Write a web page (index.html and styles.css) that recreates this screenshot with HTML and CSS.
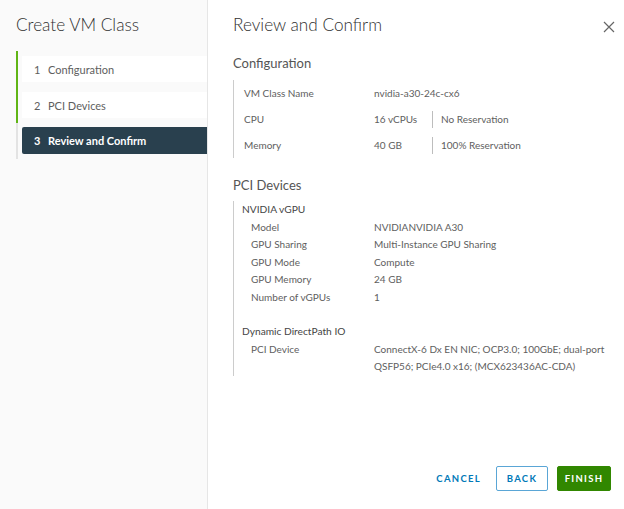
FILE: index.html
```html
<!DOCTYPE html>
<html>
<head>
<meta charset="utf-8">
<link rel="stylesheet" href="styles.css">
</head>
<body>
<div class="wizard">
  <aside class="sidebar">
    <h1 class="side-title">Create VM Class</h1>
    <ol class="steps">
      <li class="step done"><div class="step-box"><span class="num">1</span>Configuration</div></li>
      <li class="step done"><div class="step-box"><span class="num">2</span>PCI Devices</div></li>
      <li class="step current"><div class="step-box"><span class="num">3</span>Review and Confirm</div></li>
    </ol>
  </aside>
  <main class="main">
    <header class="main-head">
      <h2 class="main-title">Review and Confirm</h2>
      <button class="close" aria-label="Close">
        <svg width="12" height="12" viewBox="0 0 12 12"><path d="M1 1 L11 11 M11 1 L1 11" stroke="#666" stroke-width="1.2" fill="none"/></svg>
      </button>
    </header>
    <section class="content">
      <h3 class="sec-title">Configuration</h3>
      <div class="block config">
        <div class="row"><span class="lbl">VM Class Name</span><span class="val">nvidia-a30-24c-cx6</span></div>
        <div class="row"><span class="lbl">CPU</span><span class="val short">16 vCPUs</span><span class="sep"></span><span class="extra">No Reservation</span></div>
        <div class="row"><span class="lbl">Memory</span><span class="val short">40 GB</span><span class="sep"></span><span class="extra">100% Reservation</span></div>
      </div>
      <h3 class="sec-title pci">PCI Devices</h3>
      <div class="block pci-block">
        <div class="sub">NVIDIA vGPU</div>
        <div class="prow"><span class="plbl">Model</span><span class="pval">NVIDIANVIDIA A30</span></div>
        <div class="prow"><span class="plbl">GPU Sharing</span><span class="pval">Multi-Instance GPU Sharing</span></div>
        <div class="prow"><span class="plbl">GPU Mode</span><span class="pval">Compute</span></div>
        <div class="prow"><span class="plbl">GPU Memory</span><span class="pval">24 GB</span></div>
        <div class="prow"><span class="plbl">Number of vGPUs</span><span class="pval">1</span></div>
        <div class="sub gap">Dynamic DirectPath IO</div>
        <div class="prow"><span class="plbl">PCI Device</span><span class="pval wrap">ConnectX-6 Dx EN NIC; OCP3.0; 100GbE; <span class="nw">dual-port</span> QSFP56; PCIe4.0 x16; (MCX623436AC-CDA)</span></div>
      </div>
    </section>
    <footer class="foot">
      <button class="btn link">CANCEL</button>
      <button class="btn outline">BACK</button>
      <button class="btn primary">FINISH</button>
    </footer>
  </main>
</div>
</body>
</html>
```
FILE: styles.css
```css
* { box-sizing: border-box; }
html, body { margin: 0; padding: 0; }
body {
  font-family: Lato, "Open Sans", "Liberation Sans", sans-serif;
  color: #5e5e5e;
  background: #fff;
  width: 624px;
  height: 509px;
  overflow: hidden;
}
.wizard { display: flex; height: 509px; }
.sidebar {
  width: 208px;
  flex: none;
  background: #fafafa;
  border-right: 1px solid #e6e6e6;
  padding-top: 13px;
}
.side-title {
  margin: 0 0 14px 16px;
  font-size: 17.2px;
  line-height: 24px;
  font-weight: 300;
  color: #313131;
}
.steps {
  list-style: none;
  margin: 0 0 0 16px;
  padding: 0;
}
.step {
  border-left: 2px solid #e3e3e3;
  padding: 5px 0 5px 4px;
  height: 36px;
}
.step.done { border-left-color: #60b515; }
.step-box {
  height: 26px;
  background: #fff;
  display: flex;
  align-items: center;
  padding-left: 12px;
  font-size: 11px;
  color: #5e5e5e;
}
.num { width: 14px; flex: none; }
.step.current { padding-top: 4px; }
.step.current .step-box {
  background: #29404e;
  color: #fff;
  font-weight: 700;
  height: 27px;
  border-radius: 2px 0 0 2px;
}
.main {
  flex: 1;
  display: flex;
  flex-direction: column;
  padding: 13px 7px 18px 25px;
}
.main-head {
  display: flex;
  justify-content: space-between;
  align-items: flex-start;
}
.main-title {
  margin: 0;
  font-size: 17.2px;
  line-height: 24px;
  font-weight: 300;
  color: #313131;
}
.close {
  border: 0;
  background: none;
  padding: 0;
  margin: 6px 0 0 0;
  width: 16px;
  height: 16px;
  display: flex;
  align-items: center;
  justify-content: center;
}
.content { flex: 1; }
.sec-title {
  margin: 17px 0 8px 0;
  font-size: 13px;
  line-height: 18px;
  font-weight: 400;
  color: #555;
}
.sec-title.pci { margin: 18px 0 7px 0; }
.block {
  border-left: 1px solid #cccccc;
}
.config { padding-left: 10px; }
.row {
  display: flex;
  align-items: center;
  height: 26px;
  font-size: 10px;
}
.lbl { width: 130px; flex: none; }
.val.short { width: 58px; flex: none; }
.sep {
  width: 1px;
  height: 17px;
  background: #bdbdbd;
  margin-right: 8px;
}
.pci-block { padding-left: 8px; }
.sub {
  font-size: 10.2px;
  line-height: 17.5px;
  color: #454545;
}
.sub.gap { margin-top: 17px; }
.prow {
  display: flex;
  font-size: 10px;
  line-height: 17.5px;
  padding-left: 9px;
}
.plbl { width: 123px; flex: none; }
.pval.wrap { max-width: 236px; line-height: 17.5px; }
.nw { white-space: nowrap; }
.foot {
  display: flex;
  justify-content: flex-end;
  align-items: center;
  gap: 9px;
  padding-right: 6px;
}
.btn {
  font-family: inherit;
  font-size: 9.5px;
  font-weight: 700;
  letter-spacing: 1.3px;
  height: 25px;
  border-radius: 2px;
  cursor: pointer;
  padding: 0;
}
.btn.link {
  background: none;
  border: 0;
  color: #0079b8;
  padding: 0 6px;
}
.btn.outline {
  background: #fff;
  border: 1px solid #5aa6d6;
  color: #0079b8;
  width: 52px;
}
.btn.primary {
  background: #318700;
  border: 1px solid #318700;
  color: #fff;
  width: 54px;
}
```
